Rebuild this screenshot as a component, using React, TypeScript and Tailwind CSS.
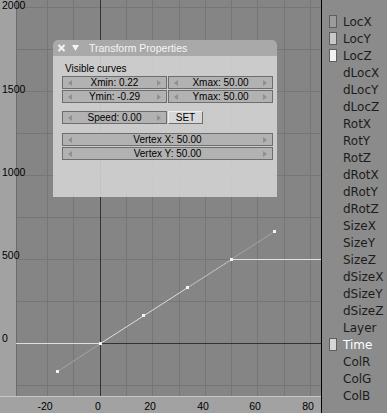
import React from 'react'

const vLines = [47, 73, 126, 152, 179, 205, 231, 257, 284, 310]
const hLines = [7, 49, 91, 133, 175, 217, 259, 301, 385]
const keyPoints: [number, number][] = [
  [57, 371],
  [100, 343],
  [143, 315],
  [187, 287],
  [231, 259],
  [274, 231],
]

const yTicks = [
  { label: '2000', top: 0 },
  { label: '1500', top: 84 },
  { label: '1000', top: 167 },
  { label: '500', top: 250 },
  { label: '0', top: 333 },
]

const xTicks = [
  { label: '-20', x: 45 },
  { label: '0', x: 98 },
  { label: '20', x: 150 },
  { label: '40', x: 203 },
  { label: '60', x: 255 },
  { label: '80', x: 308 },
]

const channels = [
  { name: 'LocX', swatch: 'bg-[#9c9c9c]' },
  { name: 'LocY', swatch: 'bg-[#c8c8c8]' },
  { name: 'LocZ', swatch: 'bg-[#f2f2f2]' },
  { name: 'dLocX' },
  { name: 'dLocY' },
  { name: 'dLocZ' },
  { name: 'RotX' },
  { name: 'RotY' },
  { name: 'RotZ' },
  { name: 'dRotX' },
  { name: 'dRotY' },
  { name: 'dRotZ' },
  { name: 'SizeX' },
  { name: 'SizeY' },
  { name: 'SizeZ' },
  { name: 'dSizeX' },
  { name: 'dSizeY' },
  { name: 'dSizeZ' },
  { name: 'Layer' },
  { name: 'Time', swatch: 'bg-[#d6d6d6]', active: true },
  { name: 'ColR' },
  { name: 'ColG' },
  { name: 'ColB' },
]

function Arrow({ dir }: { dir: 'left' | 'right' }) {
  return (
    <svg width="4" height="6" viewBox="0 0 4 6" className="shrink-0">
      <polygon
        points={dir === 'left' ? '4,0 4,6 0,3' : '0,0 0,6 4,3'}
        fill="#8f8f8f"
      />
    </svg>
  )
}

function NumField({ label, className }: { label: string; className: string }) {
  return (
    <div
      className={`flex h-[13px] items-center justify-between border border-[#6e6e6e] bg-[#b2b2b2] px-[5px] ${className}`}
    >
      <Arrow dir="left" />
      <span className="leading-none text-black">{label}</span>
      <Arrow dir="right" />
    </div>
  )
}

function Graph() {
  return (
    <svg width="305" height="396" className="block">
      <g transform="translate(-16 0)">
        <rect x="16" y="0" width="305" height="396" fill="#858585" />
        {vLines.map((x) => (
          <line key={'v' + x} x1={x + 0.5} y1="0" x2={x + 0.5} y2="396" stroke="#767676" />
        ))}
        {hLines.map((y) => (
          <line key={'h' + y} x1="16" y1={y + 0.5} x2="321" y2={y + 0.5} stroke="#767676" />
        ))}
        <line x1="16.5" y1="0" x2="16.5" y2="396" stroke="#6c6c6c" />
        <line x1="100.5" y1="0" x2="100.5" y2="396" stroke="#333333" />
        <line x1="16" y1="343.5" x2="321" y2="343.5" stroke="#333333" />

        {/* curve */}
        <line x1="57.5" y1="371.5" x2="100.5" y2="343.5" stroke="#a4a4a4" />
        <polyline
          points="16,343.5 100.5,343.5 231.5,259.5 321,259.5"
          fill="none"
          stroke="#dedede"
        />
        <line x1="187.5" y1="287.5" x2="274.5" y2="231.5" stroke="#a4a4a4" />
        <line x1="231" y1="259.5" x2="321" y2="259.5" stroke="#e2e2e2" />
        {keyPoints.map(([x, y]) => (
          <rect key={x} x={x - 1} y={y - 1} width="3" height="3" fill="#f4f4f4" />
        ))}
      </g>
    </svg>
  )
}

function TransformPanel() {
  return (
    <div className="absolute left-[53px] top-[40px] flex h-[157px] w-[224px] flex-col font-['Liberation_Sans',Arial,sans-serif]">
      <div className="flex h-[16px] items-center rounded-t-[5px] bg-[#a9a9a9] pl-[4px]">
        <svg width="9" height="8" viewBox="0 0 9 8" className="shrink-0">
          <line x1="1.5" y1="1" x2="7.5" y2="7" stroke="#f4f4f4" strokeWidth="2" />
          <line x1="7.5" y1="1" x2="1.5" y2="7" stroke="#f4f4f4" strokeWidth="2" />
        </svg>
        <svg width="7" height="6" viewBox="0 0 7 6" className="ml-[6px] shrink-0">
          <polygon points="0,0 7,0 3.5,6" fill="#f4f4f4" />
        </svg>
        <span className="ml-[10px] text-[10.5px] leading-none text-[#f6f6f6]">
          Transform Properties
        </span>
      </div>
      <div className="flex flex-1 flex-col bg-[#d3d3d3]/90 pl-[9px] pr-[4px] pt-[8px] text-[10px]">
        <div className="pl-[3px] leading-none text-black">Visible curves</div>
        <div className="mt-[2px] flex flex-col gap-px">
          <div className="flex gap-px">
            <NumField label="Xmin: 0.22" className="w-[105px]" />
            <NumField label="Xmax: 50.00" className="flex-1" />
          </div>
          <div className="flex gap-px">
            <NumField label="Ymin: -0.29" className="w-[105px]" />
            <NumField label="Ymax: 50.00" className="flex-1" />
          </div>
        </div>
        <div className="mt-[8px] flex gap-px">
          <NumField label="Speed: 0.00" className="w-[105px]" />
          <div className="flex h-[13px] w-[35px] items-center justify-center border border-[#6e6e6e] border-l-[#ececec] border-t-[#ececec] bg-[#d8d8d8] leading-none text-black">
            SET
          </div>
        </div>
        <div className="mt-[9px] flex flex-col gap-px">
          <NumField label="Vertex X: 50.00" className="w-full" />
          <NumField label="Vertex Y: 50.00" className="w-full" />
        </div>
      </div>
    </div>
  )
}

export default function App() {
  return (
    <div className="flex h-[413px] w-[387px] overflow-hidden bg-[#858585]">
      <div className="relative flex h-full w-[321px] flex-col">
        <div className="flex h-[396px]">
          <div className="w-[16px] bg-[#a2a2a2]" />
          <Graph />
        </div>
        <div className="h-[17px] border-t border-[#c6c6c6] bg-[#a2a2a2]" />

        <div className="pointer-events-none absolute inset-0 font-['Liberation_Sans',Arial,sans-serif] text-[10.5px] leading-none text-black">
          {yTicks.map((t) => (
            <span key={t.label} className="absolute left-[2px]" style={{ top: t.top }}>
              {t.label}
            </span>
          ))}
          {xTicks.map((t) => (
            <span
              key={t.label}
              className="absolute top-[401px] -translate-x-1/2"
              style={{ left: t.x }}
            >
              {t.label}
            </span>
          ))}
        </div>

        <TransformPanel />
      </div>

      <div className="w-px bg-black" />

      <div className="flex flex-1 flex-col bg-[#8b8b8b] pt-[13px] font-['DejaVu_Sans',sans-serif] text-[12px]">
        {channels.map((c) => (
          <div key={c.name} className="flex h-[17px] items-center">
            <div className="flex w-[21px] justify-start pl-[7px]">
              {c.swatch && (
                <div className={`h-[13px] w-[8px] border border-[#5e5e5e] ${c.swatch}`} />
              )}
            </div>
            <span className={`leading-none ${c.active ? 'text-white' : 'text-[#1c1c1c]'}`}>
              {c.name}
            </span>
          </div>
        ))}
      </div>
    </div>
  )
}
